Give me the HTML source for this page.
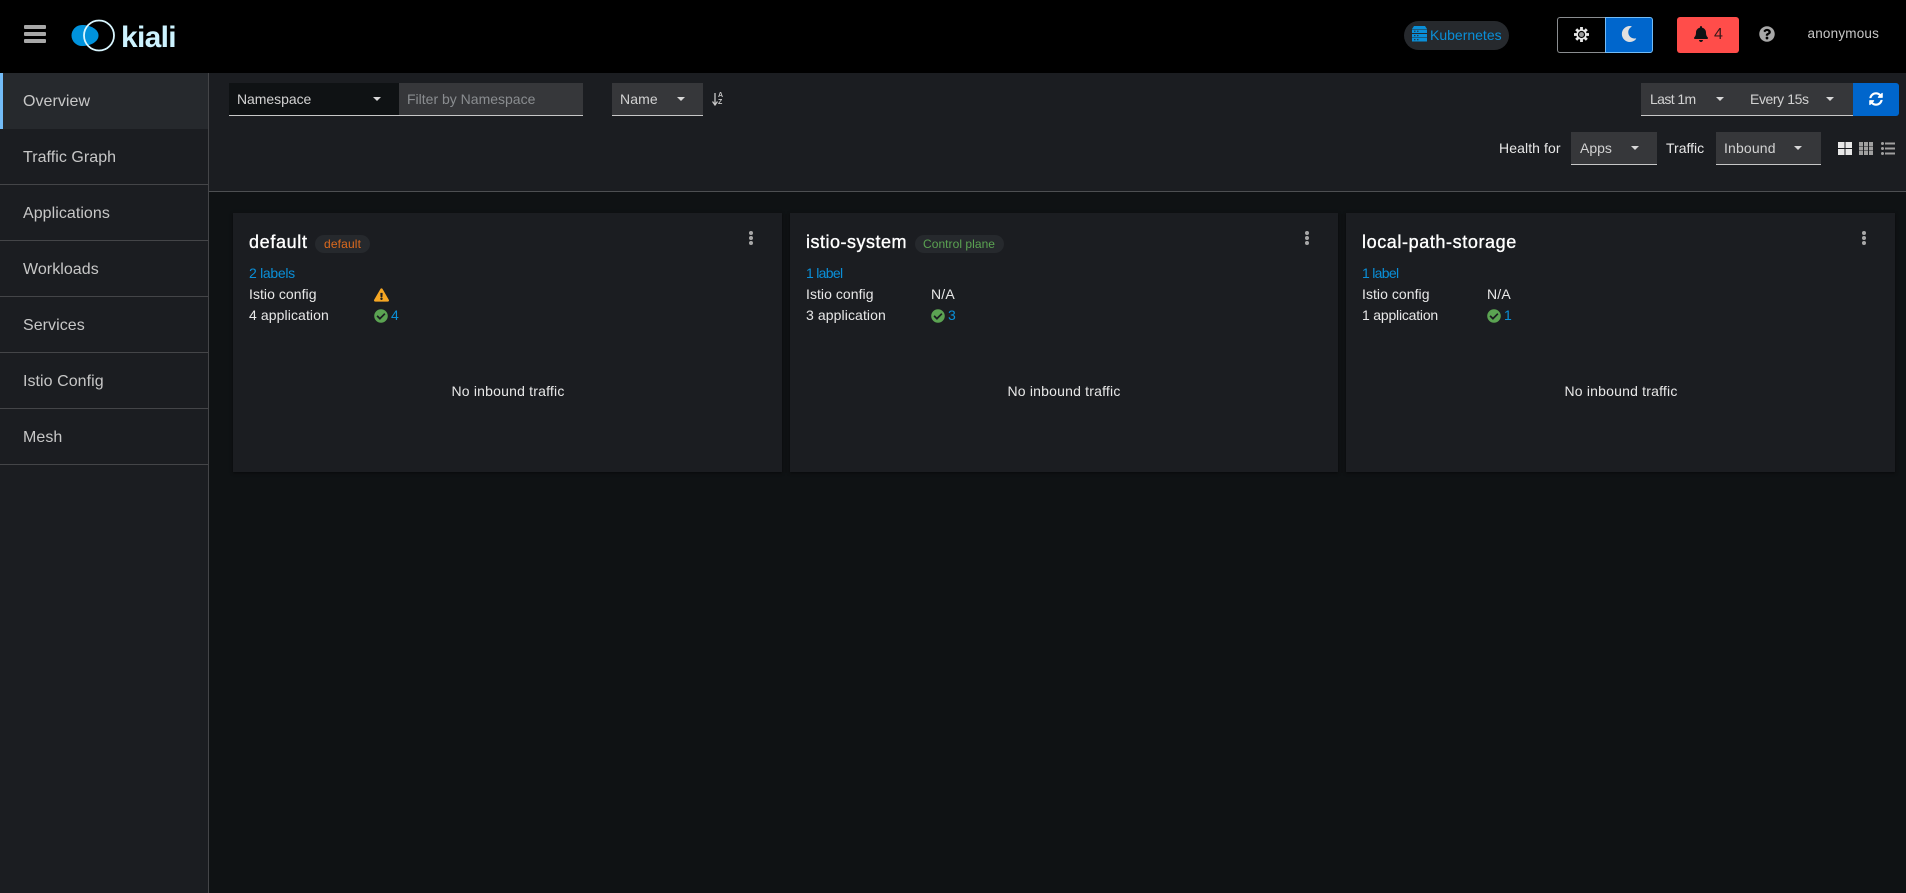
<!DOCTYPE html>
<html><head><meta charset="utf-8"><title>Kiali</title>
<style>
html,body{margin:0;padding:0;width:1906px;height:893px;overflow:hidden;background:#0f1214;font-family:"Liberation Sans",sans-serif;font-size:14px;color:#e0e0e0}
.a{position:absolute}
.t{position:absolute;white-space:nowrap;line-height:20px;height:20px}
.nav{font-size:16px;color:#c7c7c7;left:23px;line-height:24px;height:24px;letter-spacing:.05px}
.navb{position:absolute;left:0;width:208px;height:1px;background:#444548}
.sel{position:absolute;background:#36373a;border-bottom:1px solid #c7c7c7;box-sizing:border-box;height:33px}
.c{position:absolute;width:0;height:0;border-left:4.5px solid transparent;border-right:4.5px solid transparent;border-top:4.5px solid #d8d8d8}
.card{position:absolute;top:213px;height:259px;background:#1b1d21;box-shadow:0 1px 3px rgba(0,0,0,.5)}
.h{font-size:18px;font-weight:400;-webkit-text-stroke:.35px #fff;color:#fff;line-height:24px;height:24px;top:230px}
.l{color:#0a8fd8}
.m{color:#e8e8e8}
svg{position:absolute;display:block}
.dot{position:absolute;width:4px;height:4px;border-radius:50%;background:#a8a8a8}
</style></head><body>
<!-- header -->
<div class="a" style="left:0;top:0;width:1906px;height:73px;background:#000"></div>
<div class="a" style="left:24px;top:25px;width:22px;height:4px;background:#a8a8a8;border-radius:1px"></div>
<div class="a" style="left:24px;top:32px;width:22px;height:4px;background:#a8a8a8;border-radius:1px"></div>
<div class="a" style="left:24px;top:39px;width:22px;height:4px;background:#a8a8a8;border-radius:1px"></div>
<svg style="left:68px;top:18px" width="52" height="36" viewBox="68 18 52 36">
<path d="M82 25C90 25 98.500 29 98.500 35.500C98.500 42 90 46 82 46A10.500 10.500 0 0 1 82 25Z" fill="#0093dd"/>
<circle cx="99" cy="35.500" r="15" fill="none" stroke="#d8f6ff" stroke-width="1.800"/>
</svg>
<div class="t" style="left:121px;top:21px;font-size:30px;font-weight:700;line-height:34px;height:34px;color:#cdf3ff;letter-spacing:-.7px">kiali</div>

<div class="a" style="left:1404px;top:21px;width:105px;height:29px;border-radius:15px;background:#26292d"></div>
<svg style="left:1412px;top:26px" width="15" height="16" viewBox="0 0 15 16" fill="#0a8fd8"><path d="M2 0h11l2 3H0z"/><rect y="3.500" width="15" height="3.500"/><rect y="8" width="15" height="3.500"/><rect y="12" width="15" height="3.500"/><g fill="#26292d"><rect x="2" y="4.700" width="1.500" height="1"/><rect x="5" y="4.700" width="1.500" height="1"/><rect x="2" y="9.200" width="1.500" height="1"/><rect x="5" y="9.200" width="1.500" height="1"/><rect x="2" y="13.200" width="1.500" height="1"/><rect x="5" y="13.200" width="1.500" height="1"/></g></svg>
<div class="t l" style="left:1430px;top:25px;font-size:14px">Kubernetes</div>

<div class="a" style="left:1557px;top:17px;width:49px;height:36px;box-sizing:border-box;border:1px solid #8a8d90;border-right:none;border-radius:3px 0 0 3px;background:#000"></div>
<div class="a" style="left:1605px;top:17px;width:48px;height:36px;box-sizing:border-box;border:1px solid #73bcf7;border-radius:0 3px 3px 0;background:#06c"></div>
<svg style="left:1574px;top:27px" width="15" height="15" viewBox="-8 -8 16 16"><g fill="#e8e8e8"><rect x="-1.500" y="-8" width="3" height="3"/><rect x="-1.500" y="5" width="3" height="3"/><rect x="-8" y="-1.500" width="3" height="3"/><rect x="5" y="-1.500" width="3" height="3"/><rect x="-1.500" y="-8" width="3" height="3" transform="rotate(45)"/><rect x="-1.500" y="5" width="3" height="3" transform="rotate(45)"/><rect x="-8" y="-1.500" width="3" height="3" transform="rotate(45)"/><rect x="5" y="-1.500" width="3" height="3" transform="rotate(45)"/></g><circle r="4.700" fill="#000" stroke="#e8e8e8" stroke-width="1.700"/><circle r="2.600" fill="#9a9a9a"/></svg>
<svg style="left:1621px;top:26px" width="16" height="16" viewBox="0 0 512 512"><path fill="#e0e0e0" d="M283.211 512c78.962 0 151.079-35.925 198.857-94.792 7.068-8.708-.639-21.43-11.562-19.35-124.203 23.654-238.262-71.576-238.262-196.954 0-72.222 38.662-138.635 101.498-174.394 9.686-5.512 7.25-20.197-3.756-22.23A258.156 258.156 0 0 0 283.211 0c-141.309 0-256 114.511-256 256 0 141.309 114.511 256 256 256z"/></svg>

<div class="a" style="left:1677px;top:17px;width:62px;height:36px;border-radius:3px;background:#ff4d4a"></div>
<svg style="left:1694px;top:26px" width="14" height="16" viewBox="0 0 448 512"><path fill="#0f1214" d="M224 512c35.32 0 63.97-28.65 63.97-64H160.03c0 35.35 28.65 64 63.97 64zm215.39-149.710c-19.320-20.760-55.470-51.990-55.470-154.290 0-77.700-54.480-139.900-127.940-155.160V32c0-17.670-14.320-32-31.980-32s-31.980 14.330-31.980 32v20.840C118.560 68.100 64.080 130.300 64.080 208c0 102.300-36.150 133.530-55.470 154.290-6 6.45-8.66 14.16-8.61 21.71.11 16.400 12.980 32 32.100 32h383.800c19.120 0 32-15.600 32.100-32 .05-7.550-2.610-15.270-8.610-21.710z"/></svg>
<div class="t" style="left:1714px;top:25px;font-size:16px;color:#3a1a1a">4</div>
<svg style="left:1759px;top:26px" width="16" height="16" viewBox="0 0 512 512"><path fill="#a8a8a8" d="M504 256c0 136.997-111.043 248-248 248S8 392.997 8 256C8 119.083 119.043 8 256 8s248 111.083 248 248zM262.655 90c-54.497 0-89.255 22.957-116.549 63.758-3.536 5.286-2.353 12.415 2.715 16.258l34.699 26.310c5.205 3.947 12.621 3.008 16.665-2.122 17.864-22.658 30.113-35.797 57.303-35.797 20.429 0 45.698 13.148 45.698 32.958 0 14.976-12.363 22.667-32.534 33.976C247.128 238.528 216 254.941 216 296v4c0 6.627 5.373 12 12 12h56c6.627 0 12-5.373 12-12v-1.333c0-28.462 83.186-29.647 83.186-106.667 0-58.002-60.165-102-116.531-102zM256 338c-25.365 0-46 20.635-46 46 0 25.364 20.635 46 46 46s46-20.636 46-46c0-25.365-20.635-46-46-46z"/></svg>
<div class="t" style="left:1807.500px;top:24px;font-size:13.500px;color:#c7c7c7;letter-spacing:.2px">anonymous</div>

<!-- sidebar -->
<div class="a" style="left:0;top:73px;width:208px;height:820px;background:#1b1d21"></div>
<div class="a" style="left:208px;top:73px;width:1px;height:820px;background:#444548"></div>
<div class="a" style="left:0;top:73px;width:208px;height:56px;background:#26292d"></div>
<div class="a" style="left:0;top:73px;width:3px;height:56px;background:#73bcf7"></div>
<div class="t nav" style="top:90px">Overview</div>
<div class="t nav" style="top:146px">Traffic Graph</div>
<div class="navb" style="top:184px"></div>
<div class="t nav" style="top:202px">Applications</div>
<div class="navb" style="top:240px"></div>
<div class="t nav" style="top:258px">Workloads</div>
<div class="navb" style="top:296px"></div>
<div class="t nav" style="top:314px">Services</div>
<div class="navb" style="top:352px"></div>
<div class="t nav" style="top:370px">Istio Config</div>
<div class="navb" style="top:408px"></div>
<div class="t nav" style="top:426px">Mesh</div>
<div class="navb" style="top:464px"></div>

<!-- toolbar -->
<div class="a" style="left:209px;top:73px;width:1697px;height:118px;background:#1b1d21"></div>
<div class="a" style="left:209px;top:191px;width:1697px;height:1px;background:#4d4f52"></div>

<div class="sel" style="left:229px;top:83px;width:170px;background:#0f1214"></div>
<div class="t" style="left:237px;top:89px;color:#d2d2d2;letter-spacing:-.05px">Namespace</div>
<div class="c" style="left:372.500px;top:97px"></div>
<div class="sel" style="left:399px;top:83px;width:184px"></div>
<div class="t" style="left:407px;top:89px;color:#8a8d90">Filter by Namespace</div>
<div class="sel" style="left:612px;top:83px;width:91px"></div>
<div class="t" style="left:620px;top:89px;color:#d2d2d2;letter-spacing:.1px">Name</div>
<div class="c" style="left:676.500px;top:97px"></div>
<svg style="left:712px;top:93px" width="6" height="13" viewBox="0 0 6 13"><path d="M3 0v11M.5 8.500L3 12l2.500-3.500" fill="none" stroke="#c7c7c7" stroke-width="1.300"/></svg>
<div class="t" style="left:718px;top:93px;font-size:7px;line-height:6px;height:6px;font-weight:700;color:#c7c7c7">A</div>
<div class="t" style="left:718px;top:99px;font-size:7px;line-height:7px;height:7px;font-weight:700;color:#c7c7c7">Z</div>

<div class="sel" style="left:1641px;top:83px;width:212px"></div>
<div class="t" style="left:1650px;top:89px;color:#d2d2d2;letter-spacing:-.6px">Last 1m</div>
<div class="c" style="left:1716px;top:97px"></div>
<div class="t" style="left:1750px;top:89px;color:#d2d2d2;letter-spacing:-.4px">Every 15s</div>
<div class="c" style="left:1825.500px;top:97px"></div>
<div class="a" style="left:1853px;top:83px;width:46px;height:33px;background:#06c;border-radius:0 3px 3px 0"></div>
<svg style="left:1869px;top:92px" width="14" height="14" viewBox="0 0 512 512"><path fill="#fff" d="M370.720 133.280C339.458 104.008 298.888 87.962 255.848 88c-77.458.068-144.328 53.178-162.791 126.850-1.344 5.363-6.122 9.150-11.651 9.150H24.103c-7.498 0-13.194-6.807-11.807-14.176C33.933 94.924 134.813 8 256 8c66.448 0 126.791 26.136 171.315 68.685L463.030 40.970C478.149 25.851 504 36.559 504 57.941V192c0 13.255-10.745 24-24 24H345.941c-21.382 0-32.090-25.851-16.971-40.971l41.750-41.749zM32 296h134.059c21.382 0 32.090 25.851 16.971 40.971l-41.750 41.750c31.262 29.273 71.835 45.319 114.876 45.280 77.418-.07 144.315-53.144 162.787-126.849 1.344-5.363 6.122-9.150 11.651-9.150h57.304c7.498 0 13.194 6.807 11.807 14.176C478.067 417.076 377.187 504 256 504c-66.448 0-126.791-26.136-171.315-68.685L48.970 471.030C33.851 486.149 8 475.441 8 454.059V320c0-13.255 10.745-24 24-24z"/></svg>

<div class="t" style="left:1499px;top:138px;color:#e8e8e8;letter-spacing:.1px">Health for</div>
<div class="sel" style="left:1571px;top:132px;width:86px"></div>
<div class="t" style="left:1580px;top:138px;color:#d2d2d2">Apps</div>
<div class="c" style="left:1630.500px;top:146px"></div>
<div class="t" style="left:1666px;top:138px;color:#e8e8e8">Traffic</div>
<div class="sel" style="left:1716px;top:132px;width:105px"></div>
<div class="t" style="left:1724px;top:138px;color:#d2d2d2;letter-spacing:.15px">Inbound</div>
<div class="c" style="left:1794px;top:146px"></div>
<svg style="left:1838px;top:142px" width="14" height="13" viewBox="0 0 14 13" fill="#e8e8e8"><rect width="6.500" height="6"/><rect x="7.500" width="6.500" height="6"/><rect y="7" width="6.500" height="6"/><rect x="7.500" y="7" width="6.500" height="6"/></svg>
<svg style="left:1859px;top:142px" width="14" height="13" viewBox="0 0 14 13" fill="#a0a0a0"><rect width="4" height="4"/><rect x="5" width="4" height="4"/><rect x="10" width="4" height="4"/><rect y="4.500" width="4" height="4"/><rect x="5" y="4.500" width="4" height="4"/><rect x="10" y="4.500" width="4" height="4"/><rect y="9" width="4" height="4"/><rect x="5" y="9" width="4" height="4"/><rect x="10" y="9" width="4" height="4"/></svg>
<svg style="left:1881px;top:142px" width="14" height="13" viewBox="0 0 14 13" fill="#a0a0a0"><circle cx="1.500" cy="1.500" r="1.500"/><circle cx="1.500" cy="6.500" r="1.500"/><circle cx="1.500" cy="11.500" r="1.500"/><rect x="4" y=".5" width="10" height="2"/><rect x="4" y="5.500" width="10" height="2"/><rect x="4" y="10.500" width="10" height="2"/></svg>

<!-- card 1 -->
<div class="card" style="left:233px;width:549px"></div>
<div class="t h" style="left:249px;letter-spacing:.65px">default</div>
<div class="a" style="left:315px;top:235px;width:55px;height:18px;border-radius:9px;background:#26292d"></div>
<div class="t" style="left:324px;top:234px;font-size:12px;color:#dc6a1e;letter-spacing:.15px">default</div>
<div class="dot" style="left:749px;top:231px"></div><div class="dot" style="left:749px;top:236px"></div><div class="dot" style="left:749px;top:241px"></div>
<div class="t l" style="left:249px;top:263px;letter-spacing:-.3px">2 labels</div>
<div class="t m" style="left:249px;top:284px;letter-spacing:.05px">Istio config</div>
<div class="t m" style="left:249px;top:305px;letter-spacing:.1px">4 application</div>
<svg style="left:374px;top:288px" width="15" height="14" viewBox="0 0 576 512"><path fill="#f5a623" d="M569.517 440.013C587.975 472.007 564.806 512 527.940 512H48.054c-36.937 0-59.999-40.055-41.577-71.987L246.423 24.035c18.467-32.009 64.720-31.951 83.154 0l239.940 416.978zM288 354c-25.405 0-46 20.595-46 46s20.595 46 46 46 46-20.595 46-46-20.595-46-46-46zm-43.673-165.346l7.418 136c.347 6.364 5.609 11.346 11.982 11.346h48.546c6.373 0 11.635-4.982 11.982-11.346l7.418-136c.375-6.874-5.098-12.654-11.982-12.654h-63.383c-6.884 0-12.356 5.780-11.981 12.654z"/></svg>
<svg style="left:374px;top:309px" width="14" height="14" viewBox="0 0 512 512"><path fill="#5ba352" d="M504 256c0 136.967-111.033 248-248 248S8 392.967 8 256 119.033 8 256 8s248 111.033 248 248zM227.314 387.314l184-184c6.248-6.248 6.248-16.379 0-22.627l-22.627-22.627c-6.248-6.249-16.379-6.249-22.628 0L216 308.118l-70.059-70.059c-6.248-6.248-16.379-6.248-22.628 0l-22.627 22.627c-6.248 6.248-6.248 16.379 0 22.627l104 104c6.249 6.250 16.379 6.250 22.628.001z"/></svg>
<div class="t l" style="left:391px;top:305px">4</div>
<div class="t m" style="left:408px;top:381px;width:200px;text-align:center;letter-spacing:.2px">No inbound traffic</div>

<!-- card 2 -->
<div class="card" style="left:790px;width:548px"></div>
<div class="t h" style="left:806px;letter-spacing:.5px">istio-system</div>
<div class="a" style="left:915px;top:235px;width:89px;height:18px;border-radius:9px;background:#26292d"></div>
<div class="t" style="left:923px;top:234px;font-size:12px;color:#5ba352;letter-spacing:.05px">Control plane</div>
<div class="dot" style="left:1305px;top:231px"></div><div class="dot" style="left:1305px;top:236px"></div><div class="dot" style="left:1305px;top:241px"></div>
<div class="t l" style="left:806px;top:263px;letter-spacing:-.7px">1 label</div>
<div class="t m" style="left:806px;top:284px;letter-spacing:.05px">Istio config</div>
<div class="t m" style="left:806px;top:305px;letter-spacing:.1px">3 application</div>
<div class="t m" style="left:931px;top:284px;letter-spacing:.2px">N/A</div>
<svg style="left:931px;top:309px" width="14" height="14" viewBox="0 0 512 512"><path fill="#5ba352" d="M504 256c0 136.967-111.033 248-248 248S8 392.967 8 256 119.033 8 256 8s248 111.033 248 248zM227.314 387.314l184-184c6.248-6.248 6.248-16.379 0-22.627l-22.627-22.627c-6.248-6.249-16.379-6.249-22.628 0L216 308.118l-70.059-70.059c-6.248-6.248-16.379-6.248-22.628 0l-22.627 22.627c-6.248 6.248-6.248 16.379 0 22.627l104 104c6.249 6.250 16.379 6.250 22.628.001z"/></svg>
<div class="t l" style="left:948px;top:305px">3</div>
<div class="t m" style="left:964px;top:381px;width:200px;text-align:center;letter-spacing:.2px">No inbound traffic</div>

<!-- card 3 -->
<div class="card" style="left:1346px;width:549px"></div>
<div class="t h" style="left:1362px;letter-spacing:.6px">local-path-storage</div>
<div class="dot" style="left:1862px;top:231px"></div><div class="dot" style="left:1862px;top:236px"></div><div class="dot" style="left:1862px;top:241px"></div>
<div class="t l" style="left:1362px;top:263px;letter-spacing:-.7px">1 label</div>
<div class="t m" style="left:1362px;top:284px;letter-spacing:.05px">Istio config</div>
<div class="t m" style="left:1362px;top:305px;letter-spacing:-.2px">1 application</div>
<div class="t m" style="left:1487px;top:284px;letter-spacing:.2px">N/A</div>
<svg style="left:1487px;top:309px" width="14" height="14" viewBox="0 0 512 512"><path fill="#5ba352" d="M504 256c0 136.967-111.033 248-248 248S8 392.967 8 256 119.033 8 256 8s248 111.033 248 248zM227.314 387.314l184-184c6.248-6.248 6.248-16.379 0-22.627l-22.627-22.627c-6.248-6.249-16.379-6.249-22.628 0L216 308.118l-70.059-70.059c-6.248-6.248-16.379-6.248-22.628 0l-22.627 22.627c-6.248 6.248-6.248 16.379 0 22.627l104 104c6.249 6.250 16.379 6.250 22.628.001z"/></svg>
<div class="t l" style="left:1504px;top:305px">1</div>
<div class="t m" style="left:1521px;top:381px;width:200px;text-align:center;letter-spacing:.2px">No inbound traffic</div>
</body></html>
